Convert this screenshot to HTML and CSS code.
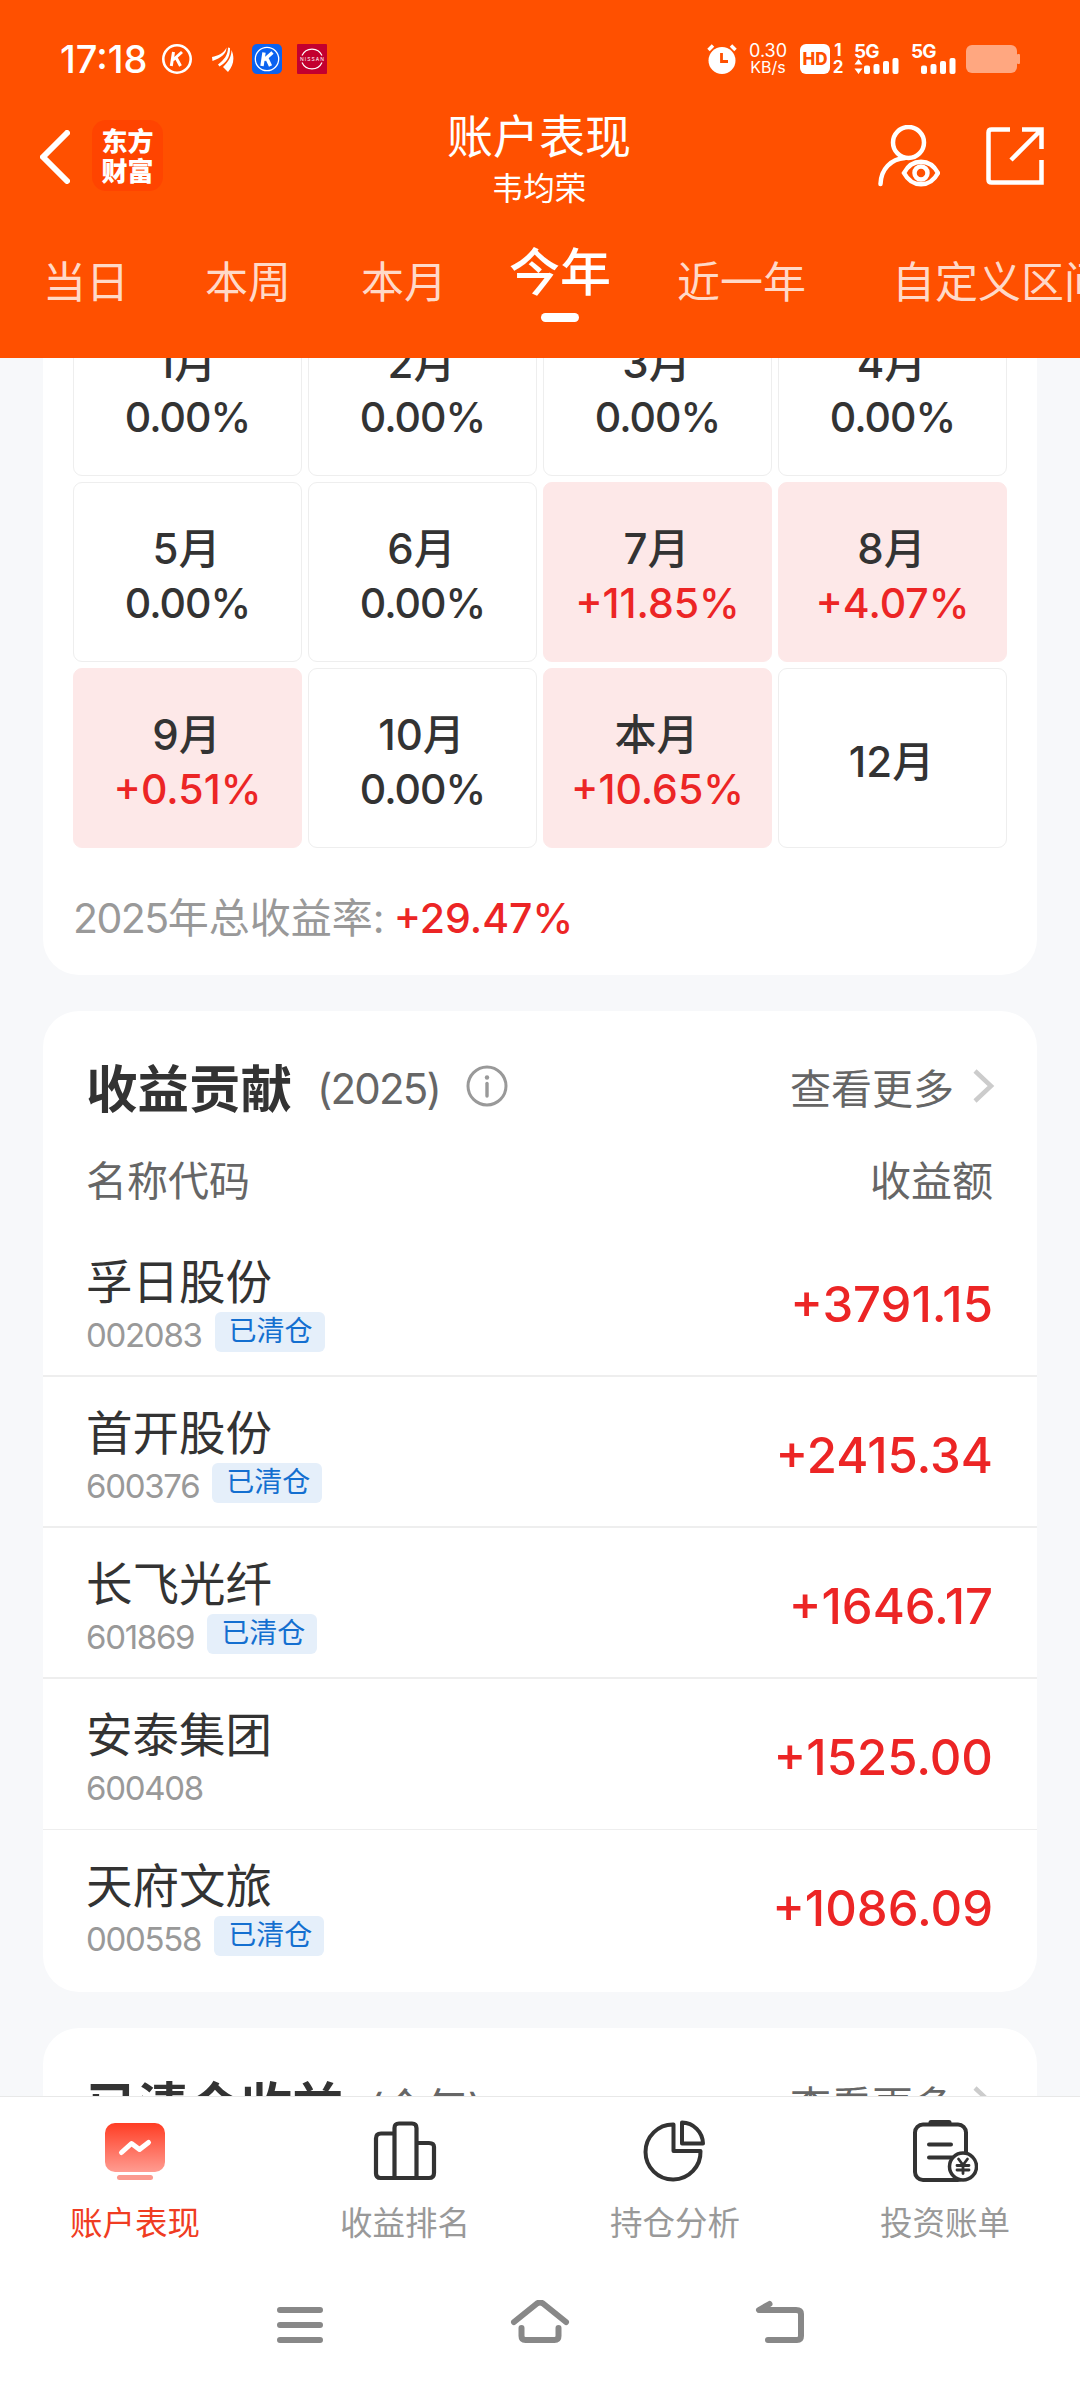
FILE: index.html
```html
<!DOCTYPE html>
<html lang="zh-CN">
<head>
  <meta charset="UTF-8">
  <title>账户表现</title>
  <link rel="stylesheet" href="styles.css">
</head>
<body>
  <header class="header">
    <div class="status-bar">
      <span class="time">17:18</span>
      <svg class="st-k" width="30" height="30" viewBox="0 0 30 30"><circle cx="15" cy="15" r="13.7" fill="none" stroke="#fff" stroke-width="2.6"/><path d="M11.5 8L9.3 22M20 8L11 16M14 13.5L18.5 22" fill="none" stroke="#fff" stroke-width="3"/></svg>
      <svg class="st-wing" width="22" height="25" viewBox="0 0 22 25"><path d="M0 10C6 9 12 6 14.500 0.500C14.500 7 9 11 0.500 14ZM6 17.500C12 13 16 8 16 0.500L18 1C18.500 10 14 16 7.500 19.500ZM11 20C16.500 15 19.500 9 19.500 3C23 11 21.500 19 16 25Z" fill="#fff"/></svg>
      <svg class="st-blue" width="30" height="30" viewBox="0 0 30 30"><rect width="30" height="30" rx="5" fill="#0b62f0"/><circle cx="15" cy="15" r="11.7" fill="none" stroke="#fff" stroke-width="1.3"/><path d="M12 8.500L10 22M20.500 8.500L12 16M14.500 13.500L18.500 22" fill="none" stroke="#fff" stroke-width="3.4"/></svg>
      <svg class="st-nissan" width="30" height="30" viewBox="0 0 30 30"><rect width="30" height="30" rx="1" fill="#c3002f"/><path d="M5 11.500A11 11 0 0 1 25 11.500M5 18.500A11 11 0 0 0 25 18.500" fill="none" stroke="#fff" stroke-width="1.2"/><text x="15" y="17" font-size="5" textLength="24" text-anchor="middle" fill="#fff">NISSAN</text></svg>
      <div class="status-right">
        <svg width="30" height="30" viewBox="0 0 30 30"><circle cx="15" cy="16.500" r="13.500" fill="#fff"/><path d="M1.500 6L6 1.500M28.500 6L24 1.500" stroke="#fff" stroke-width="3.500"/><path d="M14.500 9V17.500H21" fill="none" stroke="#ff5000" stroke-width="2.800"/></svg>
        <div class="speed"><span>0.30</span><span>KB/s</span></div>
        <div class="hd">HD</div>
        <div class="sims"><span>1</span><span>2</span></div>
        <div class="signal">
          <b>5G</b>
          <svg width="45" height="30" viewBox="0 0 45 30"><path d="M4.500 15L8.500 20.500H0.500ZM4.500 30L8.500 24.500H0.500Z" fill="#fff"/><g fill="#fff"><rect x="10" y="21.500" width="6" height="8.500" rx="2"/><rect x="19.500" y="20" width="6" height="10" rx="2"/><rect x="29" y="17" width="6" height="13" rx="2"/><rect x="38.500" y="14" width="6" height="16" rx="2"/></g></svg>
        </div>
        <div class="signal">
          <b>5G</b>
          <svg width="45" height="30" viewBox="0 0 45 30"><g fill="#fff"><rect x="10" y="21.500" width="6" height="8.500" rx="2"/><rect x="19.500" y="20" width="6" height="10" rx="2"/><rect x="29" y="17" width="6" height="13" rx="2"/><rect x="38.500" y="14" width="6" height="16" rx="2"/></g></svg>
        </div>
        <svg class="battery" width="54" height="28" viewBox="0 0 54 28"><rect width="51" height="28" rx="6" fill="#ffa780"/><rect x="51" y="9" width="3" height="10" rx="1" fill="#ffa780"/></svg>
      </div>
    </div>

    <div class="title-bar">
      <svg class="back" width="30" height="54" viewBox="0 0 30 54"><path d="M27 3L3 27L27 51" fill="none" stroke="#fff" stroke-width="6" stroke-linecap="round" stroke-linejoin="round"/></svg>
      <div class="logo"><span>东方</span><span>财富</span></div>
      <div class="titles">
        <div class="title">账户表现</div>
        <div class="subtitle">韦均荣</div>
      </div>
      <svg class="user" width="62" height="62" viewBox="0 0 62 62" fill="none" stroke="#fff" stroke-width="4.500" stroke-linecap="round"><circle cx="30.500" cy="17.500" r="15.500"/><path d="M2.500 59C3 44 13 34 27 33"/><path d="M26 48C34 33 52 33 60 48C52 63 34 63 26 48Z"/><circle cx="43" cy="48" r="6.500"/></svg>
      <svg class="share" width="58" height="58" viewBox="0 0 58 58" fill="none" stroke="#fff" stroke-width="4.500"><path d="M24 2.500H5.500Q2.500 2.500 2.500 5.500V52.500Q2.500 55.500 5.500 55.500H55.500V33"/><path d="M36 2.500H55.500V22M55.500 2.500L25 33"/></svg>
    </div>

    <nav class="tabs">
      <span>当日</span>
      <span>本周</span>
      <span>本月</span>
      <span class="active">今年</span>
      <span>近一年</span>
      <span class="custom">自定义区间</span>
    </nav>
  </header>

  <main class="content">
    <section class="card calendar">
      <div class="months">
        <div class="month"><b>1月</b><span>0.00%</span></div>
        <div class="month"><b>2月</b><span>0.00%</span></div>
        <div class="month"><b>3月</b><span>0.00%</span></div>
        <div class="month"><b>4月</b><span>0.00%</span></div>
        <div class="month"><b>5月</b><span>0.00%</span></div>
        <div class="month"><b>6月</b><span>0.00%</span></div>
        <div class="month up"><b>7月</b><span>+11.85%</span></div>
        <div class="month up"><b>8月</b><span>+4.07%</span></div>
        <div class="month up"><b>9月</b><span>+0.51%</span></div>
        <div class="month"><b>10月</b><span>0.00%</span></div>
        <div class="month up"><b>本月</b><span>+10.65%</span></div>
        <div class="month"><b>12月</b></div>
      </div>
      <div class="total"><span class="num">2025</span>年总收益率:<strong>+29.47%</strong></div>
    </section>

    <section class="card">
      <div class="card-head">
        <h2>收益贡献</h2>
        <span class="period">(2025)</span>
        <svg class="info" width="42" height="42" viewBox="0 0 42 42"><circle cx="21" cy="21" r="19" fill="none" stroke="#999" stroke-width="3"/><circle cx="21" cy="12.500" r="2.200" fill="#999"/><path d="M21 18.500V31" stroke="#999" stroke-width="3.400" stroke-linecap="round"/></svg>
        <span class="more">查看更多</span>
        <svg class="arrow" width="22" height="34" viewBox="0 0 22 34"><path d="M2 2L18 17L2 32" fill="none" stroke="#ccc" stroke-width="4.500"/></svg>
      </div>
      <div class="columns"><span>名称代码</span><span>收益额</span></div>
      <div class="row">
        <div><div class="name">孚日股份</div><div class="code"><span>002083</span><i>已清仓</i></div></div>
        <div class="amount">+3791.15</div>
      </div>
      <div class="row">
        <div><div class="name">首开股份</div><div class="code"><span>600376</span><i>已清仓</i></div></div>
        <div class="amount">+2415.34</div>
      </div>
      <div class="row">
        <div><div class="name">长飞光纤</div><div class="code"><span>601869</span><i>已清仓</i></div></div>
        <div class="amount">+1646.17</div>
      </div>
      <div class="row thin">
        <div><div class="name">安泰集团</div><div class="code"><span>600408</span></div></div>
        <div class="amount">+1525.00</div>
      </div>
      <div class="row last">
        <div><div class="name">天府文旅</div><div class="code"><span>000558</span><i>已清仓</i></div></div>
        <div class="amount">+1086.09</div>
      </div>
    </section>

    <section class="card">
      <div class="card-head">
        <h2>已清仓收益</h2>
        <span class="period cn">(今年)</span>
        <span class="more">查看更多</span>
        <svg class="arrow" width="22" height="34" viewBox="0 0 22 34"><path d="M2 2L18 17L2 32" fill="none" stroke="#ccc" stroke-width="4.500"/></svg>
      </div>
    </section>
  </main>

  <nav class="bottom-nav">
    <div class="nav-item active">
      <svg width="66" height="66" viewBox="0 0 66 66"><defs><linearGradient id="red" x1="0" y1="0" x2="0" y2="1"><stop offset="0" stop-color="#ff3d24"/><stop offset="1" stop-color="#ff9c91"/></linearGradient></defs><rect x="3" y="5" width="60" height="49" rx="10" fill="url(#red)"/><rect x="15" y="57" width="36" height="5" rx="2.500" fill="#fb9a8f"/><path d="M19.500 34.500L29.500 25.500L37.500 31.500L46.500 24.500" fill="none" stroke="#fff" stroke-width="5" stroke-linecap="round" stroke-linejoin="round"/></svg>
      <span>账户表现</span>
    </div>
    <div class="nav-item">
      <svg width="66" height="66" viewBox="0 0 66 66" fill="none" stroke="#333" stroke-width="4.200"><path d="M22 15.500H9Q4 15.500 4 20.500V55.500Q4 60 8.500 60H57Q62 60 62 55V29Q62 25 57 25H45"/><path d="M22.500 60V10Q22.500 5.500 27 5.500H40Q44.500 5.500 44.500 10V60"/></svg>
      <span>收益排名</span>
    </div>
    <div class="nav-item">
      <svg width="66" height="66" viewBox="0 0 66 66" fill="none" stroke="#333" stroke-width="4" stroke-linejoin="round"><path d="M31.500 6.500A27.500 27.500 0 1 0 58.500 33H31.500Z"/><path d="M40 4.500V25.500H61A21.500 21.500 0 0 0 40 4.500Z"/></svg>
      <span>持仓分析</span>
    </div>
    <div class="nav-item">
      <svg width="66" height="66" viewBox="0 0 66 66" fill="none" stroke="#333" stroke-width="4" stroke-linecap="round"><rect x="3" y="6.500" width="51" height="55.500" rx="8"/><path d="M19 4.500H37" stroke-width="5"/><path d="M17 26.500H39M17 39.500H40"/><circle cx="51" cy="48.500" r="13.500" fill="#fff" stroke-width="3.500"/><path d="M46.500 41L51 47L55.500 41M51 47V55.500M45 47.500H57M45 52H57" stroke-width="2.800"/></svg>
      <span>投资账单</span>
    </div>
  </nav>

  <div class="system-nav">
    <svg width="60" height="46" viewBox="0 0 60 46"><path d="M10 10H50M10 25H50M10 40H50"/></svg>
    <svg width="60" height="46" viewBox="0 0 60 46"><path d="M4 22L27 3.500Q30 1.500 33 3.500L56 22M11.500 28V36Q11.500 40 15.500 40H44.500Q48.500 40 48.500 36V28"/></svg>
    <svg width="60" height="46" viewBox="0 0 60 46"><path d="M19.500 4L9 10H46Q51 10 51 14V36Q51 40 47 40H18"/></svg>
  </div>
</body>
</html>
```

FILE: styles.css
```css
* {
  box-sizing: border-box;
}
body {
  margin: 0;
  width: 1080px;
  height: 2388px;
  display: flex;
  flex-direction: column;
  overflow: hidden;
  background-color: #f7f8fa;
  color: #333;
  font-family: Inter, "Noto Sans CJK SC", sans-serif;
}
svg {
  display: block;
  flex-shrink: 0;
}

/* header */
.header {
  height: 358px;
  flex-shrink: 0;
  background-color: #ff5000;
  color: #fff;
}
.status-bar {
  height: 118px;
  padding: 0 60px;
  display: flex;
  align-items: center;
}
.time {
  width: 102px;
  font-size: 38px;
  font-weight: 500;
}
.st-wing {
  margin-left: 20px;
}
.st-blue {
  margin-left: 18px;
}
.st-nissan {
  margin-left: 15px;
}
.status-right {
  margin-left: auto;
  display: flex;
  align-items: center;
}
.speed {
  width: 38px;
  margin-left: 12px;
  display: flex;
  flex-direction: column;
  text-align: center;
  font-size: 18px;
  line-height: 16px;
  white-space: nowrap;
}
.speed span + span {
  font-size: 16px;
}
.hd {
  width: 30px;
  height: 30px;
  margin-left: 13px;
  border-radius: 6px;
  background-color: #fff;
  color: #ff5000;
  font-size: 17px;
  font-weight: 800;
  line-height: 30px;
  text-align: center;
}
.sims {
  width: 12px;
  margin-left: 2px;
  display: flex;
  flex-direction: column;
  text-align: center;
  font-size: 17px;
  font-weight: 700;
  line-height: 17px;
}
.signal {
  position: relative;
  width: 45px;
  height: 30px;
  margin-left: 10px;
}
.signal + .signal {
  margin-left: 12px;
}
.signal b {
  position: absolute;
  left: 0;
  top: 0;
  font-size: 19px;
  font-weight: 700;
  line-height: 15px;
  letter-spacing: -1px;
}
.battery {
  margin-left: 10px;
}
.title-bar {
  position: relative;
  height: 108px;
  display: flex;
  align-items: flex-start;
}
.back {
  margin: 12px 0 0 40px;
}
.logo {
  width: 71px;
  height: 71px;
  margin: 2px 0 0 22px;
  padding-top: 7px;
  border-radius: 14px;
  background-color: #ff4400;
  display: flex;
  flex-direction: column;
  text-align: center;
  font-size: 26px;
  font-weight: 900;
  line-height: 30px;
}
.titles {
  position: absolute;
  left: 539px;
  top: -2px;
  transform: translateX(-50%);
  text-align: center;
}
.title {
  font-size: 46px;
  line-height: 40px;
}
.subtitle {
  margin-top: 17px;
  font-size: 31.5px;
  line-height: 32px;
}
.user {
  margin: 7px 0 0 auto;
}
.share {
  margin: 9px 36px 0 46px;
}
.tabs {
  height: 132px;
  padding-left: 8px;
  display: grid;
  grid-template-columns: 156px 168px 144px 168px 195px 300px;
  font-size: 43px;
  line-height: 60px;
  color: #ffd9c8;
  text-align: center;
  white-space: nowrap;
  overflow: hidden;
}
.tabs span {
  padding-top: 26px;
}
.tabs .active {
  padding-top: 17px;
  font-size: 51px;
  font-weight: 500;
  color: #fff;
}
.tabs .active::after {
  content: "";
  display: block;
  width: 38px;
  height: 9px;
  margin: 10px auto 0;
  border-radius: 5px;
  background-color: #fff;
}
.tabs .custom {
  padding-left: 53px;
  text-align: left;
}

/* scrolling content */
.content {
  height: 1738px;
  flex-shrink: 0;
  padding: 0 43px;
  overflow: hidden;
}
.card {
  margin-bottom: 36px;
  border-radius: 36px;
  background-color: #fff;
}
.calendar {
  height: 709px;
  margin-top: -92px;
  padding: 30px;
}
.months {
  display: grid;
  grid-template-columns: repeat(4, 229px);
  grid-auto-rows: 180px;
  gap: 6px;
}
.month {
  display: flex;
  flex-direction: column;
  align-items: center;
  justify-content: center;
  padding-top: 7px;
  border: 1px solid #eee;
  border-radius: 9px;
  font-size: 41px;
  font-weight: 500;
  line-height: 54px;
}
.month b {
  padding-right: 2px;
  font-size: 42px;
  font-weight: 500;
}
.month span {
  letter-spacing: -1px;
}
.month.up {
  border-color: #fde8e8;
  background-color: #fde8e8;
}
.month.up span,
.total strong,
.amount {
  color: #ec2525;
}
.month.up span {
  letter-spacing: 0;
}
.total {
  margin-top: 40px;
  font-size: 41px;
  line-height: 60px;
  color: #999;
}
.total .num {
  letter-spacing: -1.5px;
}
.total strong {
  margin-left: 9px;
  font-weight: 500;
}
.card-head {
  height: 140px;
  padding: 9px 42px 0 43px;
  display: flex;
  align-items: center;
}
.card-head h2 {
  margin: 0;
  font-size: 51.5px;
  font-weight: 700;
}
.period {
  margin-left: 25px;
  padding-top: 6px;
  font-size: 42px;
  letter-spacing: -1.8px;
  color: #666;
}
.period.cn {
  letter-spacing: 0;
}
.info {
  margin-left: 26px;
}
.more {
  margin-left: auto;
  font-size: 41px;
  color: #666;
}
.arrow {
  margin-left: 19px;
}
.columns {
  height: 75px;
  padding: 0 44px 0 43px;
  display: flex;
  justify-content: space-between;
  font-size: 41px;
  line-height: 60px;
  color: #666;
}
.row {
  height: 151px;
  padding: 26px 44px 0 43px;
  border-bottom: 2px solid #eee;
  display: flex;
  justify-content: space-between;
}
.row.thin {
  border-bottom-width: 1px;
}
.row.last {
  height: 162px;
  border-bottom: none;
}
.name {
  font-size: 46.5px;
  line-height: 60px;
}
.code {
  height: 40px;
  display: flex;
  align-items: center;
  font-size: 33px;
  letter-spacing: -1.3px;
  color: #999;
}
.code span {
  padding-top: 5px;
}
.code i {
  height: 40px;
  margin-left: 13px;
  padding: 0 12px 0 14px;
  border-radius: 6px;
  background-color: #e5effa;
  color: #146fd0;
  font-size: 28px;
  font-style: normal;
  line-height: 38px;
  letter-spacing: 0;
}
.amount {
  padding-top: 23px;
  font-size: 49px;
  font-weight: 500;
  line-height: 60px;
}

/* bottom */
.bottom-nav {
  height: 174px;
  flex-shrink: 0;
  padding-top: 21px;
  border-top: 1px solid #e8e8e8;
  background-color: #fff;
  display: grid;
  grid-template-columns: repeat(4, 270px);
  justify-items: center;
}
.nav-item {
  display: flex;
  flex-direction: column;
  align-items: center;
  font-size: 32.5px;
  line-height: 40px;
  color: #999;
}
.nav-item span {
  margin-top: 20px;
}
.nav-item.active {
  color: #f03c22;
}
.system-nav {
  flex: 1;
  padding: 30px 270px 0;
  background-color: #fff;
  display: flex;
  justify-content: space-between;
}
.system-nav svg {
  fill: none;
  stroke: #888;
  stroke-width: 6;
  stroke-linecap: round;
  stroke-linejoin: round;
}
```
